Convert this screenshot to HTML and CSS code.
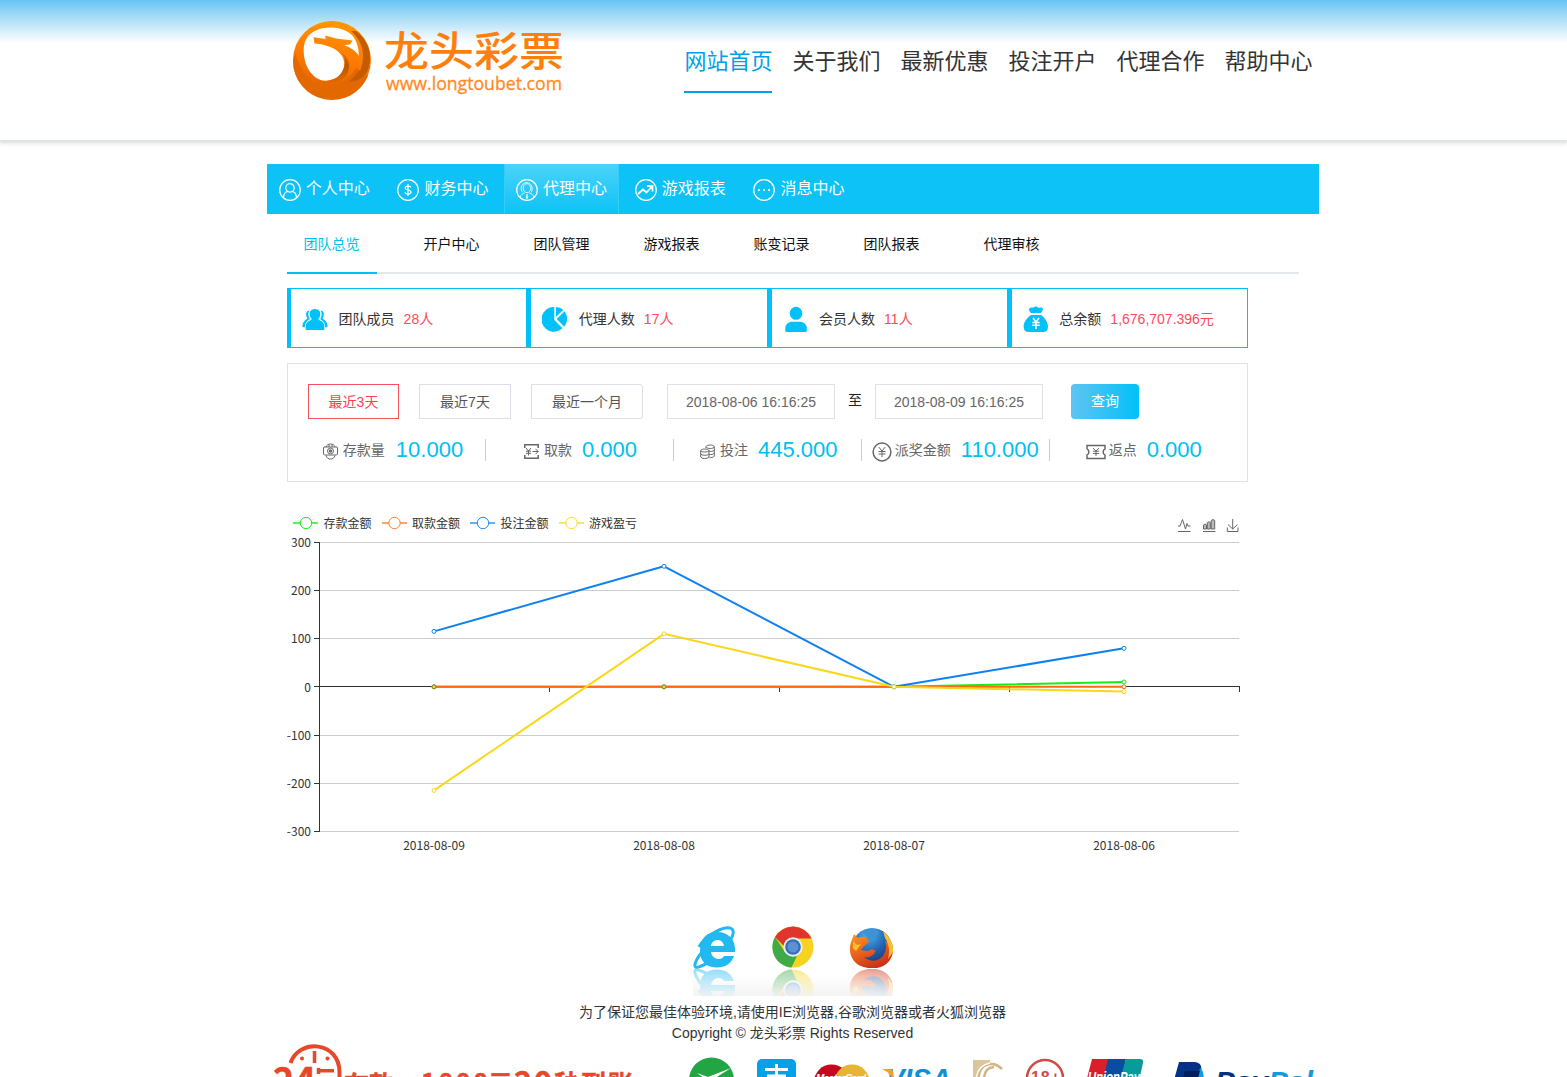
FILE: index.html
```html
<!DOCTYPE html>
<html lang="zh-CN">
<head>
<meta charset="utf-8">
<title>龙头彩票</title>
<link rel="stylesheet" href="styles.css">
</head>
<body>
<header class="header">
  <div class="wrap header-inner">
    <svg class="logo" width="280" height="84" viewBox="0 0 280 84">
      <defs>
        <linearGradient id="ring" x1="0.6" y1="0" x2="0.4" y2="1"><stop offset="0" stop-color="#ff9800"/><stop offset="0.45" stop-color="#ff7b04"/><stop offset="1" stop-color="#d96000"/></linearGradient>
        <linearGradient id="tail" x1="0" y1="0" x2="0" y2="1"><stop offset="0" stop-color="#ff8304"/><stop offset=".5" stop-color="#bd5500"/><stop offset="1" stop-color="#e06a00"/></linearGradient>
      </defs>
      <circle cx="42" cy="42" r="39" fill="url(#ring)"/>
      <path d="M5 35C10 48 12 58 26 64C38 70 56 68 66 50L78 58A39 39 0 0 1 3 43Z" fill="#e36800"/>
      <path d="M61 13Q78 28 71 51L59 64Q80 62 80 40Q80 24 66 13Z" fill="#c35b00"/>
      <path d="M40.300 9.500C23 10 13.700 18 13.700 33C14 51 25 63 36 62.700C48 62 54.500 54 54.300 45.300C54 35 43 27 24.500 25.500L23.500 19.300L35.500 21L35.300 17.500L46 20.500L62.500 22.500L60 26.500L54 27Q65 31 68.700 38Q69 25 62 17Q53 9 40.300 9.500Z" fill="#fff"/>
      <path d="M44 28.500C54 33 57.500 44 53 52C49 60 43 63 34 63.500Q46 68 56 58Q66 42 44 28.500Z" fill="url(#tail)"/>
      <text class="logo-name" x="94" y="0" textLength="180" lengthAdjust="spacingAndGlyphs" transform="translate(0 48) scale(1 .91)">龙头彩票</text>
      <text class="logo-url" x="96" y="72" textLength="176" lengthAdjust="spacingAndGlyphs">www.longtoubet.com</text>
    </svg>
    <nav class="top-nav">
      <a class="top-link is-active">网站首页</a><a class="top-link">关于我们</a><a class="top-link">最新优惠</a><a class="top-link">投注开户</a><a class="top-link">代理合作</a><a class="top-link">帮助中心</a>
    </nav>
  </div>
</header>

<main class="wrap">
  <nav class="main-nav">
    <a class="main-link"><svg class="nav-icon" viewBox="0 0 22 22"><circle cx="11" cy="11" r="10.3"/><circle cx="11" cy="8.9" r="4.2"/><path d="M4.5 18.5C4.8 15 6.6 12.7 9 12.4M17.5 18.5C17.2 15 15.4 12.7 13 12.4"/></svg>个人中心</a>
    <a class="main-link"><svg class="nav-icon" viewBox="0 0 22 22"><circle cx="11" cy="11" r="10.3"/><path d="M11 5V17M14 8.4C13.4 6.7 8.3 6.4 8.2 9C8.2 11.5 14 10.4 14 13.2C13.8 15.8 8.4 15.4 8 13.4"/></svg>财务中心</a>
    <a class="main-link is-active"><svg class="nav-icon" viewBox="0 0 22 22"><circle cx="11" cy="11" r="10.3"/><g class="fine"><ellipse cx="11" cy="9.200" rx="3.800" ry="4.500"/><path d="M7 13.500C3.500 10.500 5 4.500 10 3.700C15 3.500 18 9 15 13.500M4.200 18C4.700 15.800 6.500 14.800 8.800 14M13.200 14C15.500 14.800 17.300 15.800 17.800 18"/></g><path d="M11 15V20M9.800 18H12.200"/></svg>代理中心</a>
    <a class="main-link"><svg class="nav-icon" viewBox="0 0 22 22"><circle cx="11" cy="11" r="10.3"/><path class="bold" d="M3 15L8 10.5L11.5 13.5L17 7.5M12 7H17.5V12.5"/></svg>游戏报表</a>
    <a class="main-link"><svg class="nav-icon" viewBox="0 0 22 22"><circle cx="11" cy="11" r="10.3"/><path class="dots" d="M6 11.1h.01M11 11.1h.01M16 11.1h.01"/></svg>消息中心</a>
  </nav>

  <nav class="tabs">
    <a class="tab is-active">团队总览</a><a class="tab tab-spaced">开户中心</a><a class="tab">团队管理</a><a class="tab">游戏报表</a><a class="tab">账变记录</a><a class="tab">团队报表</a><a class="tab tab-spaced">代理审核</a>
  </nav>

  <section class="cards">
    <div class="card"><svg class="card-icon" viewBox="0 0 26 26"><path d="M13 3C17 3 18.8 6 18.2 9C17.800 11.500 16.800 12.700 16 13.300C18.500 15 22 15.500 22.300 20V24H3.700V20C4 15.500 7.500 15 10 13.300C9.200 12.700 8.200 11.500 7.800 9C7.200 6 9 3 13 3ZM7.500 4.500C4 4.500 3 9 5.500 12.500C2.500 14.500.5 16 .4 21L2.800 21.500C3 17.500 4 15.500 7.800 13.200C6 10.500 5.800 7 7.500 4.500ZM18.500 4.500C22 4.500 23 9 20.500 12.500C23.500 14.500 25.500 16 25.600 21L23.200 21.500C23 17.500 22 15.500 18.200 13.200C20 10.500 20.200 7 18.500 4.500Z"/></svg><span>团队成员</span><b>28人</b></div>
    <div class="card"><svg class="card-icon" viewBox="0 0 26 26"><path d="M12.300 1V14L20.500 22.300A12.400 12.400 0 1 1 12.300 1ZM14 1A12 12 0 0 1 21.300 4L14 10.800ZM22.500 5.300A12.300 12.300 0 0 1 22.300 20.700L14.700 13Z"/></svg><span>代理人数</span><b>17人</b></div>
    <div class="card"><svg class="card-icon" viewBox="0 0 26 26"><ellipse cx="13" cy="7.300" rx="6.300" ry="6.500"/><path d="M2.300 25V22C2.300 18 6 15.700 9 15.700H17C21 15.700 23.800 19 23.800 22V25Q23.500 26 22.500 26H3.500Q2.500 26 2.300 25Z"/></svg><span>会员人数</span><b>11人</b></div>
    <div class="card"><svg class="card-icon" viewBox="0 0 26 26"><path d="M8 7C6.500 6 5.300 3.500 6.500 2.200C8 .9 9.500 2 10.500 1.400C12 .3 13.500.3 15 1.400C16.500 2.100 18.500.9 19.700 2.400C20.500 4 18.500 6 17.500 7ZM8 9H18C21 11 25 15.500 25 20.500Q25 26 20 26H6Q.6 26 .6 20.500C.6 15.500 5 11 8 9Z"/><path class="cut" d="M10 12L13 16L16 12M13 16V23M9.300 16.500H16.700M9.300 19.300H16.700"/></svg><span>总余额</span><b>1,676,707.396元</b></div>
  </section>

  <section class="panel">
    <div class="filters">
      <button class="range is-active">最近3天</button><button class="range">最近7天</button><button class="range range-month">最近一个月</button>
      <div class="date date-from">2018-08-06 16:16:25</div><span class="to">至</span><div class="date">2018-08-09 16:16:25</div>
      <button class="query">查询</button>
    </div>
    <div class="stats">
      <div class="stat shift-l"><svg class="stat-icon i15" viewBox="0 0 15 17"><path d="M3 4C4 0 11 0 12 4M1 4H14L14.5 5V11L13.5 12H1.5L.5 11V5ZM3 12.5C4 17.300 11 17.300 12 12.500M6 1.500V4M9 1.500V4"/><circle cx="7.500" cy="8" r="3"/><circle class="heavy" cx="7.500" cy="8" r="1"/></svg><span>存款量</span><b class="wide">10.000</b></div>
      <div class="stat shift-s"><svg class="stat-icon i15" viewBox="0 0 15 17"><path class="heavy" d="M.8 5V1.700H14.200V5M.8 12V15.300H14.200V12"/><path d="M2 5L4.500 8L7 5M4.500 8V12.500M2 8.200H7M2 10.300H7M8.500 8.500H14M11.500 5.800L14.200 8.500L11.500 11.200"/></svg><span>取款</span><b>0.000</b></div>
      <div class="stat shift-m"><svg class="stat-icon i15" viewBox="0 0 15 17"><path d="M6 5V3.500C7 1.500 13.500 1.500 14.300 3.500V13C13.500 14.500 11 14.700 9.500 14.600M6 4C7 6 13.500 6 14.300 4M8.800 8C10 8.800 13.500 8.600 14.300 7M9.300 11.400C11 11.800 13.500 11.500 14.300 10M.7 7.500C1.500 5.500 8 5.500 9 7.500V14C8 16 1.500 16 .7 14ZM.7 7.800C1.500 9.500 8 9.500 9 7.800M.7 11C1.500 12.700 8 12.700 9 11"/></svg><span>投注</span><b>445.000</b></div>
      <div class="stat"><svg class="stat-icon i20" viewBox="0 0 20 20"><circle class="heavy" cx="10" cy="10" r="8.900"/><path d="M6.700 5L10 9L13.300 5M10 9V15M6.500 9.500H13.500M6.500 12H13.500"/></svg><span class="close">派奖金额</span><b>110.000</b></div>
      <div class="stat"><svg class="stat-icon i20" viewBox="0 0 20 20"><path class="heavy" d="M1 7V3.500H19V7C16.500 8 16.500 12 19 13V16.500H1V13C3.500 12 3.500 8 1 7"/><path d="M7 6L10 9L13 6M10 9V14M7 9.200H13M7 11.500H13"/></svg><span class="close">返点</span><b>0.000</b></div>
    </div>
  </section>

  <section class="chart">
    <svg width="1052" height="365" viewBox="267 505 1052 365">
      <g class="legend">
        <g stroke="#12f012"><path d="M293 523H318"/><circle cx="306" cy="523" r="5.700"/></g><text x="323.500" y="528">存款金额</text>
        <g stroke="#ff7d26"><path d="M382 523H407"/><circle cx="394.500" cy="523" r="5.700"/></g><text x="412" y="528">取款金额</text>
        <g stroke="#238df7"><path d="M470 523H495"/><circle cx="483" cy="523" r="5.700"/></g><text x="500.500" y="528">投注金额</text>
        <g stroke="#f9dc2c"><path d="M559 523H584"/><circle cx="571.500" cy="523" r="5.700"/></g><text x="589" y="528">游戏盈亏</text>
      </g>
      <g class="tools"><path d="M1178 531.500H1190.500M1178 526H1180L1182.500 519.500L1185.500 529L1187 523.500L1188 526H1190.500"/><path class="bars" d="M1203.500 529V525Q1205 523 1206.500 525V529ZM1207.300 529V522.500Q1208.800 521 1210.300 522.500V529ZM1211.200 529V520.500Q1213 518.500 1214.700 520.500V529Z"/><path d="M1203 531.500H1215.500"/><path d="M1232.700 519V529M1228 524.500L1232.700 529L1237.500 524.500M1227.300 527.500V531.500H1238V527.500"/></g>
      <path class="grid" d="M320 542.500H1239M320 590.500H1239M320 638.500H1239M320 735.500H1239M320 783.500H1239M320 831.500H1239"/>
      <path class="axis" d="M319.500 542V832M314 542.500H320M314 590.500H320M314 638.500H320M314 686.500H1240M314 735.500H320M314 783.500H320M314 831.500H320M549.500 687V692M779.500 687V692M1009.500 687V692M1239.500 687V692"/>
      <g class="labels end"><text x="311" y="547">300</text><text x="311" y="595">200</text><text x="311" y="643">100</text><text x="311" y="692">0</text><text x="311" y="740">-100</text><text x="311" y="788">-200</text><text x="311" y="836">-300</text></g>
      <g class="labels mid"><text x="434" y="850">2018-08-09</text><text x="664" y="850">2018-08-08</text><text x="894" y="850">2018-08-07</text><text x="1124" y="850">2018-08-06</text></g>
      <g class="series" stroke="#12f012"><path d="M434 686.800H894L1124 682"/><g class="pts"><circle cx="434" cy="686.800" r="2"/><circle cx="664" cy="686.800" r="2"/><circle cx="894" cy="686.800" r="2"/><circle cx="1124" cy="682" r="2"/></g></g>
      <g class="series" stroke="#ff6a0d"><path d="M434 686.800H1124"/><g class="pts"><circle cx="1124" cy="686.800" r="2"/></g></g>
      <g class="series" stroke="#1080f0"><path d="M434 631.400L664 566.300L894 686.800L1124 648.300"/><g class="pts"><circle cx="434" cy="631.400" r="2"/><circle cx="664" cy="566.300" r="2"/><circle cx="894" cy="686.800" r="2"/><circle cx="1124" cy="648.300" r="2"/></g></g>
      <g class="series" stroke="#f9d71c"><path d="M434 790.400L664 633.800L894 686.800L1124 691.600"/><g class="pts"><circle cx="434" cy="790.400" r="2"/><circle cx="664" cy="633.800" r="2"/><circle cx="894" cy="686.800" r="2"/><circle cx="1124" cy="691.600" r="2"/></g></g>
      <g class="zero"><circle cx="434" cy="686.800" r="2"/><circle cx="664" cy="686.800" r="2"/></g>
    </svg>
  </section>
</main>

<footer class="wrap footer">
  <svg class="browsers" width="200" height="72" viewBox="0 0 200 72">
    <defs>
      <linearGradient id="fade" x1="0" y1="0" x2="0" y2="1"><stop offset="0" stop-color="#fff" stop-opacity=".5"/><stop offset="1" stop-color="#fff" stop-opacity="0"/></linearGradient>
      <linearGradient id="floor" x1="0" y1="0" x2="0" y2="1"><stop offset="0" stop-color="#fff"/><stop offset="1" stop-color="#f4f4f4"/></linearGradient>
      <mask id="reflect"><rect y="43" width="200" height="30" fill="url(#fade)"/></mask>
      <linearGradient id="fox" x1="0" y1="0" x2=".5" y2="1"><stop offset="0" stop-color="#f79b25"/><stop offset=".6" stop-color="#e65c1c"/><stop offset="1" stop-color="#c93418"/></linearGradient>
      <radialGradient id="globe" cx=".4" cy=".15" r=".9"><stop offset="0" stop-color="#4db5f2"/><stop offset=".5" stop-color="#2364b0"/><stop offset="1" stop-color="#12265f"/></radialGradient>
    </defs>
    <rect y="50" width="200" height="21" fill="url(#floor)"/>
    <g id="icons">
      <path fill="#22b8f0" fill-rule="evenodd" d="M7 26C7 13 14 7 24 7C36 7 43 15 42 27H18C19 35 29 36 31 31H41C38 39 32 42.500 24 42.500C14 42.500 7 37 7 26ZM18 21H31C30 13 19 13 18 21Z"/>
      <path fill="none" stroke="#22b8f0" stroke-width="3" d="M6 22C13 9 34-1 39.500 4.500Q41.500 8 38 14M9 27C1 37-1 45 7 41.500Q12 40 17 36"/>
      <circle cx="100" cy="22" r="20.500" fill="#f7d320"/>
      <path fill="#e0352c" d="M82 12A20.500 20.500 0 0 1 118.500 13.500H100A9 9 0 0 0 91 21Z"/>
      <path fill="#3faa47" d="M82 12L92 27Q97 32 104 31L98.500 42.500A20.500 20.500 0 0 1 82 12Z"/>
      <circle cx="100" cy="22" r="9.700" fill="#e9eef4"/><circle cx="100" cy="22" r="7.800" fill="#386eb8"/><circle cx="100" cy="22" r="5.500" fill="#5c91d1"/>
      <circle cx="179" cy="23" r="20" fill="url(#globe)"/>
      <path fill="#3d93d6" d="M169 7Q173 3 180 4Q187 5 186 9L181 11L184 15Q176 17 174 12Z"/>
      <path fill="url(#fox)" d="M161 9L165 13Q168 11 173 12L176 17L171 21L168 25L175 26L179 24L183 26Q178 34 171 32Q181 40 190 31Q195 24 192 16L197 19L196 13Q201 20 200 27C198 39 188 44 178 43C160 43 154 28 158 17Z"/>
      <path fill="#f9bf32" d="M190 6Q201 15 200 27L195 34Q198 22 192 13ZM160 16L164 20L168 19L163 26L160 23Z"/>
    </g>
    <g mask="url(#reflect)"><use href="#icons" transform="translate(0 87) scale(1 -1)"/></g>
  </svg>
  <p class="note">为了保证您最佳体验环境,请使用IE浏览器,谷歌浏览器或者火狐浏览器</p>
  <p class="note">Copyright © 龙头彩票 Rights Reserved</p>
  <svg class="partners" width="1052" height="34" viewBox="267 1043 1052 34">
    <g class="promo">
      <path d="M290.500 1063C299 1038 340 1041 339.500 1073V1082" fill="none" stroke="#e6482a" stroke-width="4"/>
      <path d="M314.500 1051V1063M319 1070.800H334M318.500 1068V1074" fill="none" stroke="#e6482a" stroke-width="3.500"/>
      <circle cx="302" cy="1058.500" r="2"/><circle cx="327.500" cy="1058.500" r="2"/>
      <text class="big" x="273" y="1094" textLength="43">24</text>
      <text class="cn" x="344" y="1094">存款</text><text class="num" x="421" y="1092" textLength="67">1000</text><text class="cn" x="488" y="1093">元</text><text class="num-big" x="514" y="1093.500" textLength="38">20</text><text class="cn" x="554" y="1093" textLength="79">秒到账</text>
    </g>
    <circle cx="711.500" cy="1080" r="22.500" fill="#22a644"/><path d="M697 1073L708 1077L731 1068L709 1082Z" fill="#fff"/>
    <rect x="757" y="1059" width="39" height="39" rx="5" fill="#05a0ea"/><path d="M765 1069.500H788M776.500 1064V1076M767 1076H786" fill="none" stroke="#fff" stroke-width="3"/>
    <circle cx="831.500" cy="1082" r="17.500" fill="#c5081f"/><circle cx="852" cy="1082" r="17.500" fill="#e8b533"/><text class="mc" x="816" y="1082" textLength="50">MasterCard</text>
    <text class="visa" x="886" y="1089" textLength="65" lengthAdjust="spacingAndGlyphs">VISA</text><path d="M882 1069H890Q893 1069 893 1074V1079Q889 1072 882 1069Z" fill="#f4a02b"/>
    <path d="M973 1060H990V1064Q981 1066 980 1077H973Z" fill="#dcc49b"/><path d="M977 1079C980 1063 993 1060 1002 1069M984 1079Q984 1068 994 1067" fill="none" stroke="#d1b487" stroke-width="2.500"/><path d="M976 1079Q978 1065 990 1063" fill="none" stroke="#fff" stroke-width="1.500"/>
    <circle cx="1045" cy="1078" r="18" fill="none" stroke="#cf4b45" stroke-width="2.500"/><text class="age" x="1031" y="1083" textLength="29">18+</text>
    <path d="M1092 1059H1110L1103 1090H1084Z" fill="#db1f2a"/><path d="M1108 1059H1126L1119 1090H1101Z" fill="#094da2"/><path d="M1126 1059H1140Q1144 1059 1143 1063L1137 1090H1117Z" fill="#079b9c"/><text class="up" x="1088" y="1082" textLength="52" lengthAdjust="spacingAndGlyphs">UnionPay</text>
    <path d="M1179 1062H1195Q1203 1063 1201 1072L1199 1080H1174Z" fill="#073182"/><path d="M1200 1068Q1205 1072 1203 1080H1197Z" fill="#129bde"/><path d="M1185 1071H1200L1198 1078H1183Z" fill="#02205d"/>
    <text class="paypal" x="1215" y="1092" textLength="98" lengthAdjust="spacingAndGlyphs"><tspan fill="#073182">Pay</tspan><tspan fill="#129bde">Pal</tspan></text>
  </svg>
</footer>
</body>
</html>
```
FILE: styles.css
```css
* { box-sizing: border-box; }
html, body { margin: 0; height: 1077px; overflow: hidden; }
body { background: #fff; color: #333; font: 14px/20px "Liberation Sans", "Noto Sans CJK SC", sans-serif; }
.wrap { width: 1052px; margin-left: 267px; }
button { font: inherit; margin: 0; padding: 0; }

.header { height: 140px; background: linear-gradient(#66c4f4 0, #a9ddf8 18px, #fff 43px); border-bottom: 1px solid #fff; box-shadow: 0 -1px 1px #eee, 0 3px 2px #e1e4e4, 0 5px 4px #f2f2f2; }
.header-inner { display: flex; padding-top: 18px; }
.logo { flex: none; margin-left: 23px; }
.logo-name { font: 500 45px "Noto Sans CJK SC", sans-serif; fill: #ff7f0e; }
.logo-url { font: 18.5px "Open Sans", sans-serif; fill: #ff8a22; stroke: #ff8a22; stroke-width: .3; }
.top-nav { display: flex; gap: 20px; margin-left: 114px; height: 75px; }
.top-link { width: 88px; font-size: 22px; line-height: 88px; height: 75px; text-indent: .6px; color: #333; white-space: nowrap; }
.top-link.is-active { color: #00a0e9; border-bottom: 2px solid #00a0e9; }

.main-nav { display: flex; gap: 3.7px; height: 50px; margin-top: 24px; background: #0cc2f7; }
.main-link { display: flex; align-items: center; gap: 5px; width: 115px; height: 50px; padding: 0 0 1px 11.7px; color: #fff; font-size: 16px; white-space: nowrap; }
.main-link.is-active { background: linear-gradient(#4bd3f9, #0cc2f7); border: solid #35cdf8; border-width: 0 1px; padding-left: 10.7px; }
.nav-icon { width: 22px; height: 22px; margin-top: 3px; fill: none; stroke: #fff; stroke-width: 1.2; }
.nav-icon .bold { stroke-width: 1.8; }
.nav-icon .fine { stroke-width: .8; }
.nav-icon .dots { stroke-width: 2.2; stroke-linecap: round; }

.tabs { display: flex; gap: 20px; width: 1012px; height: 60px; margin-left: 20px; border-bottom: 2px solid #e4e8ea; }
.tab { width: 90px; height: 60px; line-height: 60px; padding-right: 1px; text-align: center; color: #111; }
.tab-spaced { margin-left: 10px; }
.tab.is-active { color: #00bff3; border-bottom: 2px solid #00bff3; }

.cards { display: flex; width: 961px; height: 60px; margin: 14px 0 0 20px; }
.card { flex: 1; display: flex; align-items: center; padding: 2px 0 0 11px; border: 1px solid #00bff3; border-left: 4px solid #00c1fa; white-space: nowrap; }
.card-icon { width: 26px; height: 26px; margin-right: 10.6px; fill: #00c1fa; }
.card-icon .cut { fill: none; stroke: #fff; stroke-width: 1.6; }
.card b { margin-left: 9px; font-weight: 400; color: #fb4a5b; }

.panel { width: 961px; height: 119px; margin: 15px 0 0 20px; padding: 20px; border: 1px solid #e3e3e3; }
.filters { display: flex; height: 35px; }
.range { width: 92px; height: 35px; margin-right: 20px; background: #fff; border: 1px solid #dcdfe8; color: #555; }
.range.is-active { width: 91px; border-color: #f9505e; color: #f9404f; }
.range-month { width: 112px; margin-right: 24px; border-radius: 0 3px 3px 0; }
.date { width: 168px; height: 35px; line-height: 34px; text-align: center; border: 1px solid #e1e1e1; color: #666; }
.to { width: 40px; line-height: 32px; text-align: center; color: #222; }
.query { width: 68px; height: 35px; margin-left: 28px; padding-bottom: 2px; border: 0; border-radius: 4px; background: linear-gradient(90deg, #5fc4f2, #00c1f8); color: #fff; }
.stats { display: flex; margin: 20px 0 0 -10px; }
.stat { width: 188px; height: 22px; display: flex; flex: none; align-items: center; justify-content: center; color: #666; white-space: nowrap; }
.stat:not(:last-child) { border-right: 1px solid #ccc; }
.shift-l { padding-left: 3px; }
.shift-s { padding-left: 2px; }
.shift-m { padding-left: 2.5px; }
.stat-icon { fill: none; stroke: #666; stroke-width: 1; }
.stat-icon .heavy { stroke-width: 1.5; }
.i15 { width: 15px; height: 17px; margin-top: 3px; }
.i20 { width: 20px; height: 20px; margin-top: 3px; }
.stat span { margin-left: 5px; }
.stat .close { margin-left: 2.500px; }
.stat b { margin-left: 10px; color: #00bff3; font-size: 22px; font-weight: 400; }
.stat .wide { margin-left: 11px; }

.chart { height: 365px; margin-top: 23px; }
.chart svg { display: block; }
.chart text { font: 12px "Noto Sans CJK SC", sans-serif; fill: #333; }
.legend circle { fill: #fff; }
.legend path { stroke-width: 1.4; }
.grid { stroke: #ccc; fill: none; }
.axis { stroke: #333; fill: none; }
.tools { fill: none; stroke: #666; }
.tools .bars { fill: #bbb; }
.end { text-anchor: end; }
.mid { text-anchor: middle; }
.series { fill: none; stroke-width: 2; stroke-linejoin: bevel; }
.pts { fill: #fff; stroke-width: 1; }
.zero { fill: #e4cf86; stroke: #a67b00; stroke-width: 1; }

.footer { text-align: center; }
.browsers { display: block; margin: 55px auto 5px; }
.note { margin: 0; line-height: 21px; padding-right: 1px; }
.partners { display: block; margin-top: -1px; }
.promo { fill: #e6482a; font-family: "Noto Sans CJK SC", sans-serif; font-weight: 700; }
.promo text { font-weight: 700; stroke: #e6482a; stroke-width: .5; }
.big { font-size: 36px; }
.cn { font-size: 25px; }
.num { font-size: 25px; }
.num-big { font-size: 31px; }
.mc { font: italic 700 10px "Liberation Sans", sans-serif; fill: #fff; }
.visa { font: italic 700 29px "Liberation Sans", sans-serif; fill: #108ed6; }
.age { font: 700 16px "Liberation Sans", sans-serif; fill: #cf4b45; }
.up { font: italic 700 15px "Liberation Sans", sans-serif; fill: #fff; }
.paypal { font: italic 700 30px "Liberation Sans", sans-serif; }
```
